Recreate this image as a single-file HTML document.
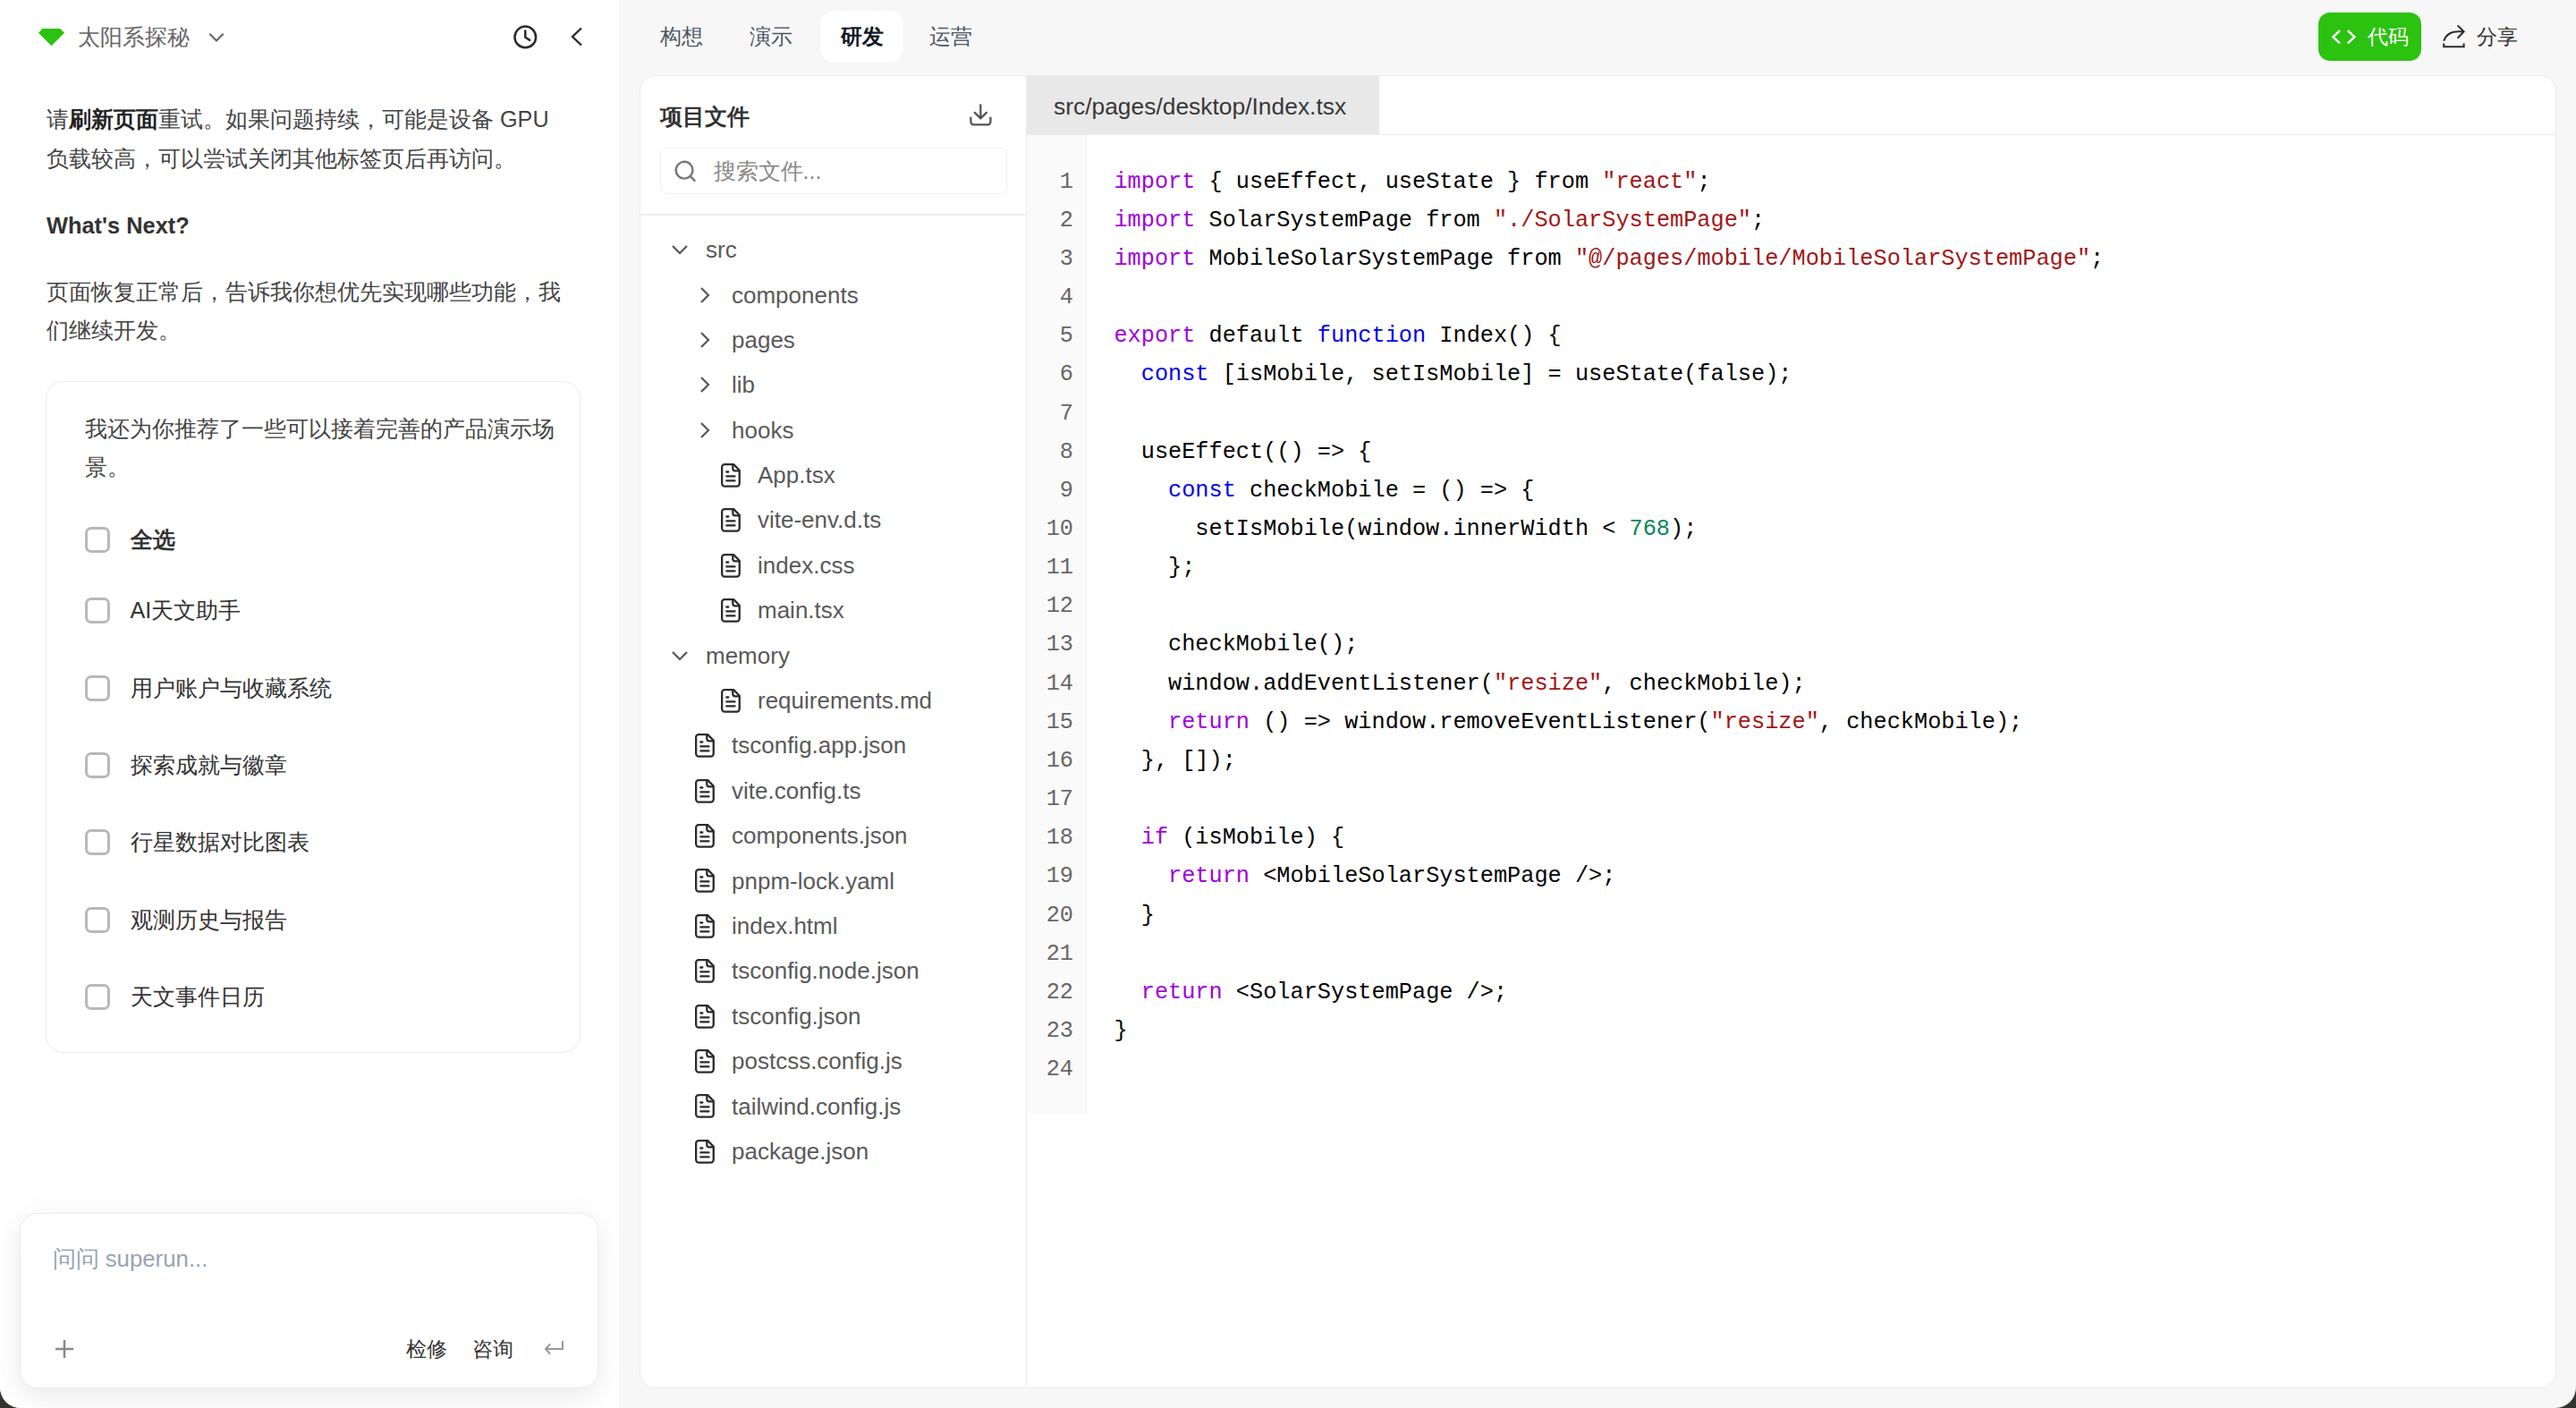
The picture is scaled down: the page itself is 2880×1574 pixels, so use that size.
<!DOCTYPE html>
<html><head><meta charset="utf-8">
<style>
*{box-sizing:border-box;margin:0;padding:0}
html,body{width:2880px;height:1574px;overflow:hidden;background:#34322c}
body{font-family:"Liberation Sans",sans-serif;position:relative}
#app{position:absolute;left:0;top:0;width:2880px;height:1574px;background:#f7f7f7;border-radius:0 0 23px 23px;overflow:hidden}
.abs{position:absolute}
.nw{white-space:nowrap}
#left{position:absolute;left:0;top:0;width:692px;height:1574px;background:#fff}
.ttl{left:87px;top:21.5px;font-size:25px;line-height:38px;color:#666}
.para{left:52px;font-size:25.2px;line-height:43.2px;color:#444}
.para b{color:#222;font-weight:bold}
.h3{left:52px;font-size:25.4px;font-weight:bold;color:#333;line-height:40px}
#card{left:50.5px;top:426px;width:598px;height:751px;border:1.5px solid #ececec;border-radius:20px;background:#fff}
.cb{position:absolute;left:43.5px;width:28px;height:28.5px;border:3px solid #b8b8b8;border-radius:7px}
.cbl{position:absolute;left:94px;font-size:25.2px;line-height:40px;color:#333}
#input{left:22px;top:1356px;width:647px;height:195.5px;border:1.5px solid #ececec;border-radius:20px;background:#fff;box-shadow:0 0 34px rgba(0,0,0,0.045),0 14px 28px rgba(0,0,0,0.05)}
.tab{position:absolute;top:12px;height:58px;font-size:23.6px;line-height:58px;color:#4b5563;padding:0 20px}
.tab.act{background:#fff;color:#111827;font-weight:bold;border-radius:16px;width:93px;padding:0;text-align:center}
#main{left:715px;top:84px;width:2143px;height:1468px;background:#fff;border:1.5px solid #ebebeb;border-radius:18px;overflow:hidden}
#files{position:absolute;left:0;top:0;width:432px;height:100%;border-right:1.5px solid #ebebeb}
.tr{position:absolute;font-size:26px;line-height:40px;color:#595959;white-space:nowrap}
#editor{position:absolute;left:432px;top:0;right:0;height:100%}
#etab{position:absolute;left:0;top:0;right:0;height:66px;border-bottom:1.5px solid #ebebeb}
#etab .t{position:absolute;left:0;top:0;width:394px;height:65px;overflow:hidden;background:#e8e8e8;font-size:26.4px;line-height:68px;color:#383838;padding-left:30px}
#gutter{position:absolute;left:0;top:66px;width:67px;height:1094px;background:#fafafa;border-right:1.5px solid #eeeeee}
#code{font-family:"Liberation Mono",monospace;font-size:25.28px;line-height:43.15px;white-space:pre;color:#000}
.ln{position:absolute;left:0;width:51px;text-align:right;color:#666}
.k{color:#a100d9}.f{color:#0000ee}.s{color:#a31515}.n{color:#098658}
</style></head><body>
<div id="app">
 <div id="left">
  <svg class="abs" style="left:42.9px;top:31.8px" width="30" height="21" viewBox="0 0 30 21"><path d="M4.5 0H24.2L29 4.8L14.5 19.2L0 4.8Z" fill="#2bc210"/></svg>
  <div class="abs nw ttl">太阳系探秘</div>
  <svg class="abs" style="left:230.5px;top:33.7px" width="22" height="14" viewBox="0 0 22 14"><path d="M3.3 3.8L11 11.5L18.7 3.8" fill="none" stroke="#666" stroke-width="2.2"/></svg>
  <svg class="abs" style="left:572px;top:27px" width="30" height="30" viewBox="0 0 30 30"><circle cx="15.3" cy="14.4" r="11.8" fill="none" stroke="#2b2b2b" stroke-width="2.5"/><path d="M15.3 7.4V14.8L20.3 17.9" fill="none" stroke="#2b2b2b" stroke-width="2.5" stroke-linecap="round" stroke-linejoin="round"/></svg>
  <svg class="abs" style="left:634px;top:28px" width="22" height="26" viewBox="0 0 22 26"><path d="M16 3.5L6 13L16 22.5" fill="none" stroke="#2b2b2b" stroke-width="2.4"/></svg>

  <div class="abs nw para" style="top:112.3px">请<b>刷新页面</b>重试。如果问题持续，可能是设备 GPU<br>负载较高，可以尝试关闭其他标签页后再访问。</div>
  <div class="abs nw h3" style="top:231.5px">What's Next?</div>
  <div class="abs nw para" style="top:305px">页面恢复正常后，告诉我你想优先实现哪些功能，我<br>们继续开发。</div>

  <div id="card" class="abs">
   <div class="abs nw para" style="left:43px;top:31px;color:#444">我还为你推荐了一些可以接着完善的产品演示场<br>景。</div>
   <div class="cb" style="top:162px"></div><div class="cbl nw" style="top:156px;font-weight:bold;color:#333">全选</div>
   <div class="cb" style="top:241px"></div><div class="cbl nw" style="top:235px">AI天文助手</div>
   <div class="cb" style="top:328px"></div><div class="cbl nw" style="top:322px">用户账户与收藏系统</div>
   <div class="cb" style="top:414px"></div><div class="cbl nw" style="top:408px">探索成就与徽章</div>
   <div class="cb" style="top:500px"></div><div class="cbl nw" style="top:494px">行星数据对比图表</div>
   <div class="cb" style="top:587px"></div><div class="cbl nw" style="top:581px">观测历史与报告</div>
   <div class="cb" style="top:673px"></div><div class="cbl nw" style="top:667px">天文事件日历</div>
  </div>

  <div id="input" class="abs">
   <div class="abs nw" style="left:35.5px;top:29.5px;font-size:25.8px;line-height:40px;color:#9aa3af">问问 superun...</div>
   <svg class="abs" style="left:37px;top:138.5px" width="24" height="24" viewBox="0 0 24 24"><path d="M12 2V22M2 12H22" stroke="#888" stroke-width="2.6"/></svg>
   <div class="abs nw" style="left:431px;top:131px;font-size:23.4px;line-height:40px;color:#333">检修</div>
   <div class="abs nw" style="left:504.5px;top:131px;font-size:23.4px;line-height:40px;color:#333">咨询</div>
   <svg class="abs" style="left:584px;top:140px" width="26" height="20" viewBox="0 0 26 20"><path d="M22 2V11H3M8 5.5L3 11L8 16.5" fill="none" stroke="#999" stroke-width="2"/></svg>
  </div>
 </div>

 <div class="tab" style="left:718px">构想</div>
 <div class="tab" style="left:818px">演示</div>
 <div class="tab act" style="left:917px">研发</div>
 <div class="tab" style="left:1019px">运营</div>

 <div class="abs" style="left:2592px;top:14px;width:115px;height:54px;background:#2bc210;border-radius:13px"></div>
 <svg class="abs" style="left:2604px;top:30px" width="32" height="22" viewBox="0 0 32 22"><path d="M12 4.2L4.4 11.3L12 18.4M20.8 4.2L28.4 11.3L20.8 18.4" fill="none" stroke="#fff" stroke-width="2.5"/></svg>
 <div class="abs nw" style="left:2647px;top:22px;font-size:23.4px;line-height:38px;color:#fff">代码</div>
 <svg class="abs" style="left:2725px;top:22px" width="36" height="36" viewBox="0 0 36 36"><path d="M22.6 6.4L29.6 13.3L22.6 20.8M7.2 23.8C9.6 16.8 15.5 13.3 23.5 13.3H29.4M7.2 26.6V30.2H29.6V26.6" fill="none" stroke="#2b2b2b" stroke-width="2"/></svg>
 <div class="abs nw" style="left:2769px;top:22px;font-size:23.4px;line-height:38px;color:#333">分享</div>

 <div id="main" class="abs">
  <div id="files">
   <div class="abs nw" style="left:22px;top:25.5px;font-size:24.6px;line-height:40px;font-weight:bold;color:#333">项目文件</div>
   <svg class="abs" style="left:365px;top:29px" width="30" height="30" viewBox="0 0 30 30"><path d="M15.3 3.4V18M8.7 11.9L15.3 18.3L21.9 11.9M4.4 17.6V22.3A3 3 0 0 0 7.4 25.3H23.4A3 3 0 0 0 26.4 22.3V17.6" fill="none" stroke="#555" stroke-width="2.3" stroke-linecap="round" stroke-linejoin="round"/></svg>
   <div class="abs" style="left:22px;top:80px;width:388px;height:52px;border:1.5px solid #f0f0f0;border-radius:8px"></div>
   <svg class="abs" style="left:36px;top:93px" width="30" height="30" viewBox="0 0 30 30"><circle cx="13.1" cy="12.2" r="9.4" fill="none" stroke="#777" stroke-width="2.4"/><path d="M19.9 19.1L24.6 23.8" stroke="#777" stroke-width="2.4" stroke-linecap="round"/></svg>
   <div class="abs nw" style="left:81.6px;top:86px;font-size:25.2px;line-height:40px;color:#888">搜索文件...</div>
   <div class="abs" style="left:0;top:154px;width:430px;height:1.5px;background:#eeeeee"></div>
  </div>
  <div id="editor">
   <div id="etab"><div class="t nw">src/pages/desktop/Index.tsx</div></div>
   <div id="gutter"></div>
  </div>
 </div>
<svg class="abs" style="left:749px;top:268.30px" width="22" height="22" viewBox="0 0 22 22"><path d="M3 7L11 15L19 7" fill="none" stroke="#555" stroke-width="2.2"/></svg>
<div class="tr" style="left:789px;top:254.10px;line-height:50.395px">src</div>
<svg class="abs" style="left:777px;top:318.69px" width="22" height="22" viewBox="0 0 22 22"><path d="M7 3L15 11L7 19" fill="none" stroke="#555" stroke-width="2.2"/></svg>
<div class="tr" style="left:818px;top:304.50px;line-height:50.395px">components</div>
<svg class="abs" style="left:777px;top:369.09px" width="22" height="22" viewBox="0 0 22 22"><path d="M7 3L15 11L7 19" fill="none" stroke="#555" stroke-width="2.2"/></svg>
<div class="tr" style="left:818px;top:354.89px;line-height:50.395px">pages</div>
<svg class="abs" style="left:777px;top:419.49px" width="22" height="22" viewBox="0 0 22 22"><path d="M7 3L15 11L7 19" fill="none" stroke="#555" stroke-width="2.2"/></svg>
<div class="tr" style="left:818px;top:405.29px;line-height:50.395px">lib</div>
<svg class="abs" style="left:777px;top:469.88px" width="22" height="22" viewBox="0 0 22 22"><path d="M7 3L15 11L7 19" fill="none" stroke="#555" stroke-width="2.2"/></svg>
<div class="tr" style="left:818px;top:455.68px;line-height:50.395px">hooks</div>
<svg class="abs" style="left:804.9px;top:516.78px" width="24" height="28" viewBox="0 0 24 28"><path d="M5.2 2.15H15.2L21.75 8.8V23.6A3 3 0 0 1 18.75 26.6H5.2A3 3 0 0 1 2.15 23.6V5.2A3 3 0 0 1 5.2 2.15Z" fill="none" stroke="#2b2b2b" stroke-width="2.3" stroke-linejoin="round"/><path d="M14.3 2.3V6.8A2.5 2.5 0 0 0 16.8 9.3H21.6" fill="none" stroke="#2b2b2b" stroke-width="2.3" stroke-linejoin="round"/><path d="M7.3 10.5H9.3M7.3 15.45H16.5M7.3 20.4H16.5" stroke="#2b2b2b" stroke-width="2.3" stroke-linecap="round"/></svg>
<div class="tr" style="left:847px;top:506.08px;line-height:50.395px">App.tsx</div>
<svg class="abs" style="left:804.9px;top:567.17px" width="24" height="28" viewBox="0 0 24 28"><path d="M5.2 2.15H15.2L21.75 8.8V23.6A3 3 0 0 1 18.75 26.6H5.2A3 3 0 0 1 2.15 23.6V5.2A3 3 0 0 1 5.2 2.15Z" fill="none" stroke="#2b2b2b" stroke-width="2.3" stroke-linejoin="round"/><path d="M14.3 2.3V6.8A2.5 2.5 0 0 0 16.8 9.3H21.6" fill="none" stroke="#2b2b2b" stroke-width="2.3" stroke-linejoin="round"/><path d="M7.3 10.5H9.3M7.3 15.45H16.5M7.3 20.4H16.5" stroke="#2b2b2b" stroke-width="2.3" stroke-linecap="round"/></svg>
<div class="tr" style="left:847px;top:556.47px;line-height:50.395px">vite-env.d.ts</div>
<svg class="abs" style="left:804.9px;top:617.57px" width="24" height="28" viewBox="0 0 24 28"><path d="M5.2 2.15H15.2L21.75 8.8V23.6A3 3 0 0 1 18.75 26.6H5.2A3 3 0 0 1 2.15 23.6V5.2A3 3 0 0 1 5.2 2.15Z" fill="none" stroke="#2b2b2b" stroke-width="2.3" stroke-linejoin="round"/><path d="M14.3 2.3V6.8A2.5 2.5 0 0 0 16.8 9.3H21.6" fill="none" stroke="#2b2b2b" stroke-width="2.3" stroke-linejoin="round"/><path d="M7.3 10.5H9.3M7.3 15.45H16.5M7.3 20.4H16.5" stroke="#2b2b2b" stroke-width="2.3" stroke-linecap="round"/></svg>
<div class="tr" style="left:847px;top:606.87px;line-height:50.395px">index.css</div>
<svg class="abs" style="left:804.9px;top:667.96px" width="24" height="28" viewBox="0 0 24 28"><path d="M5.2 2.15H15.2L21.75 8.8V23.6A3 3 0 0 1 18.75 26.6H5.2A3 3 0 0 1 2.15 23.6V5.2A3 3 0 0 1 5.2 2.15Z" fill="none" stroke="#2b2b2b" stroke-width="2.3" stroke-linejoin="round"/><path d="M14.3 2.3V6.8A2.5 2.5 0 0 0 16.8 9.3H21.6" fill="none" stroke="#2b2b2b" stroke-width="2.3" stroke-linejoin="round"/><path d="M7.3 10.5H9.3M7.3 15.45H16.5M7.3 20.4H16.5" stroke="#2b2b2b" stroke-width="2.3" stroke-linecap="round"/></svg>
<div class="tr" style="left:847px;top:657.26px;line-height:50.395px">main.tsx</div>
<svg class="abs" style="left:749px;top:721.86px" width="22" height="22" viewBox="0 0 22 22"><path d="M3 7L11 15L19 7" fill="none" stroke="#555" stroke-width="2.2"/></svg>
<div class="tr" style="left:789px;top:707.66px;line-height:50.395px">memory</div>
<svg class="abs" style="left:804.9px;top:768.75px" width="24" height="28" viewBox="0 0 24 28"><path d="M5.2 2.15H15.2L21.75 8.8V23.6A3 3 0 0 1 18.75 26.6H5.2A3 3 0 0 1 2.15 23.6V5.2A3 3 0 0 1 5.2 2.15Z" fill="none" stroke="#2b2b2b" stroke-width="2.3" stroke-linejoin="round"/><path d="M14.3 2.3V6.8A2.5 2.5 0 0 0 16.8 9.3H21.6" fill="none" stroke="#2b2b2b" stroke-width="2.3" stroke-linejoin="round"/><path d="M7.3 10.5H9.3M7.3 15.45H16.5M7.3 20.4H16.5" stroke="#2b2b2b" stroke-width="2.3" stroke-linecap="round"/></svg>
<div class="tr" style="left:847px;top:758.05px;line-height:50.395px">requirements.md</div>
<svg class="abs" style="left:775.8px;top:819.14px" width="24" height="28" viewBox="0 0 24 28"><path d="M5.2 2.15H15.2L21.75 8.8V23.6A3 3 0 0 1 18.75 26.6H5.2A3 3 0 0 1 2.15 23.6V5.2A3 3 0 0 1 5.2 2.15Z" fill="none" stroke="#2b2b2b" stroke-width="2.3" stroke-linejoin="round"/><path d="M14.3 2.3V6.8A2.5 2.5 0 0 0 16.8 9.3H21.6" fill="none" stroke="#2b2b2b" stroke-width="2.3" stroke-linejoin="round"/><path d="M7.3 10.5H9.3M7.3 15.45H16.5M7.3 20.4H16.5" stroke="#2b2b2b" stroke-width="2.3" stroke-linecap="round"/></svg>
<div class="tr" style="left:818px;top:808.45px;line-height:50.395px">tsconfig.app.json</div>
<svg class="abs" style="left:775.8px;top:869.54px" width="24" height="28" viewBox="0 0 24 28"><path d="M5.2 2.15H15.2L21.75 8.8V23.6A3 3 0 0 1 18.75 26.6H5.2A3 3 0 0 1 2.15 23.6V5.2A3 3 0 0 1 5.2 2.15Z" fill="none" stroke="#2b2b2b" stroke-width="2.3" stroke-linejoin="round"/><path d="M14.3 2.3V6.8A2.5 2.5 0 0 0 16.8 9.3H21.6" fill="none" stroke="#2b2b2b" stroke-width="2.3" stroke-linejoin="round"/><path d="M7.3 10.5H9.3M7.3 15.45H16.5M7.3 20.4H16.5" stroke="#2b2b2b" stroke-width="2.3" stroke-linecap="round"/></svg>
<div class="tr" style="left:818px;top:858.84px;line-height:50.395px">vite.config.ts</div>
<svg class="abs" style="left:775.8px;top:919.93px" width="24" height="28" viewBox="0 0 24 28"><path d="M5.2 2.15H15.2L21.75 8.8V23.6A3 3 0 0 1 18.75 26.6H5.2A3 3 0 0 1 2.15 23.6V5.2A3 3 0 0 1 5.2 2.15Z" fill="none" stroke="#2b2b2b" stroke-width="2.3" stroke-linejoin="round"/><path d="M14.3 2.3V6.8A2.5 2.5 0 0 0 16.8 9.3H21.6" fill="none" stroke="#2b2b2b" stroke-width="2.3" stroke-linejoin="round"/><path d="M7.3 10.5H9.3M7.3 15.45H16.5M7.3 20.4H16.5" stroke="#2b2b2b" stroke-width="2.3" stroke-linecap="round"/></svg>
<div class="tr" style="left:818px;top:909.24px;line-height:50.395px">components.json</div>
<svg class="abs" style="left:775.8px;top:970.33px" width="24" height="28" viewBox="0 0 24 28"><path d="M5.2 2.15H15.2L21.75 8.8V23.6A3 3 0 0 1 18.75 26.6H5.2A3 3 0 0 1 2.15 23.6V5.2A3 3 0 0 1 5.2 2.15Z" fill="none" stroke="#2b2b2b" stroke-width="2.3" stroke-linejoin="round"/><path d="M14.3 2.3V6.8A2.5 2.5 0 0 0 16.8 9.3H21.6" fill="none" stroke="#2b2b2b" stroke-width="2.3" stroke-linejoin="round"/><path d="M7.3 10.5H9.3M7.3 15.45H16.5M7.3 20.4H16.5" stroke="#2b2b2b" stroke-width="2.3" stroke-linecap="round"/></svg>
<div class="tr" style="left:818px;top:959.63px;line-height:50.395px">pnpm-lock.yaml</div>
<svg class="abs" style="left:775.8px;top:1020.73px" width="24" height="28" viewBox="0 0 24 28"><path d="M5.2 2.15H15.2L21.75 8.8V23.6A3 3 0 0 1 18.75 26.6H5.2A3 3 0 0 1 2.15 23.6V5.2A3 3 0 0 1 5.2 2.15Z" fill="none" stroke="#2b2b2b" stroke-width="2.3" stroke-linejoin="round"/><path d="M14.3 2.3V6.8A2.5 2.5 0 0 0 16.8 9.3H21.6" fill="none" stroke="#2b2b2b" stroke-width="2.3" stroke-linejoin="round"/><path d="M7.3 10.5H9.3M7.3 15.45H16.5M7.3 20.4H16.5" stroke="#2b2b2b" stroke-width="2.3" stroke-linecap="round"/></svg>
<div class="tr" style="left:818px;top:1010.03px;line-height:50.395px">index.html</div>
<svg class="abs" style="left:775.8px;top:1071.12px" width="24" height="28" viewBox="0 0 24 28"><path d="M5.2 2.15H15.2L21.75 8.8V23.6A3 3 0 0 1 18.75 26.6H5.2A3 3 0 0 1 2.15 23.6V5.2A3 3 0 0 1 5.2 2.15Z" fill="none" stroke="#2b2b2b" stroke-width="2.3" stroke-linejoin="round"/><path d="M14.3 2.3V6.8A2.5 2.5 0 0 0 16.8 9.3H21.6" fill="none" stroke="#2b2b2b" stroke-width="2.3" stroke-linejoin="round"/><path d="M7.3 10.5H9.3M7.3 15.45H16.5M7.3 20.4H16.5" stroke="#2b2b2b" stroke-width="2.3" stroke-linecap="round"/></svg>
<div class="tr" style="left:818px;top:1060.42px;line-height:50.395px">tsconfig.node.json</div>
<svg class="abs" style="left:775.8px;top:1121.52px" width="24" height="28" viewBox="0 0 24 28"><path d="M5.2 2.15H15.2L21.75 8.8V23.6A3 3 0 0 1 18.75 26.6H5.2A3 3 0 0 1 2.15 23.6V5.2A3 3 0 0 1 5.2 2.15Z" fill="none" stroke="#2b2b2b" stroke-width="2.3" stroke-linejoin="round"/><path d="M14.3 2.3V6.8A2.5 2.5 0 0 0 16.8 9.3H21.6" fill="none" stroke="#2b2b2b" stroke-width="2.3" stroke-linejoin="round"/><path d="M7.3 10.5H9.3M7.3 15.45H16.5M7.3 20.4H16.5" stroke="#2b2b2b" stroke-width="2.3" stroke-linecap="round"/></svg>
<div class="tr" style="left:818px;top:1110.82px;line-height:50.395px">tsconfig.json</div>
<svg class="abs" style="left:775.8px;top:1171.91px" width="24" height="28" viewBox="0 0 24 28"><path d="M5.2 2.15H15.2L21.75 8.8V23.6A3 3 0 0 1 18.75 26.6H5.2A3 3 0 0 1 2.15 23.6V5.2A3 3 0 0 1 5.2 2.15Z" fill="none" stroke="#2b2b2b" stroke-width="2.3" stroke-linejoin="round"/><path d="M14.3 2.3V6.8A2.5 2.5 0 0 0 16.8 9.3H21.6" fill="none" stroke="#2b2b2b" stroke-width="2.3" stroke-linejoin="round"/><path d="M7.3 10.5H9.3M7.3 15.45H16.5M7.3 20.4H16.5" stroke="#2b2b2b" stroke-width="2.3" stroke-linecap="round"/></svg>
<div class="tr" style="left:818px;top:1161.21px;line-height:50.395px">postcss.config.js</div>
<svg class="abs" style="left:775.8px;top:1222.31px" width="24" height="28" viewBox="0 0 24 28"><path d="M5.2 2.15H15.2L21.75 8.8V23.6A3 3 0 0 1 18.75 26.6H5.2A3 3 0 0 1 2.15 23.6V5.2A3 3 0 0 1 5.2 2.15Z" fill="none" stroke="#2b2b2b" stroke-width="2.3" stroke-linejoin="round"/><path d="M14.3 2.3V6.8A2.5 2.5 0 0 0 16.8 9.3H21.6" fill="none" stroke="#2b2b2b" stroke-width="2.3" stroke-linejoin="round"/><path d="M7.3 10.5H9.3M7.3 15.45H16.5M7.3 20.4H16.5" stroke="#2b2b2b" stroke-width="2.3" stroke-linecap="round"/></svg>
<div class="tr" style="left:818px;top:1211.61px;line-height:50.395px">tailwind.config.js</div>
<svg class="abs" style="left:775.8px;top:1272.70px" width="24" height="28" viewBox="0 0 24 28"><path d="M5.2 2.15H15.2L21.75 8.8V23.6A3 3 0 0 1 18.75 26.6H5.2A3 3 0 0 1 2.15 23.6V5.2A3 3 0 0 1 5.2 2.15Z" fill="none" stroke="#2b2b2b" stroke-width="2.3" stroke-linejoin="round"/><path d="M14.3 2.3V6.8A2.5 2.5 0 0 0 16.8 9.3H21.6" fill="none" stroke="#2b2b2b" stroke-width="2.3" stroke-linejoin="round"/><path d="M7.3 10.5H9.3M7.3 15.45H16.5M7.3 20.4H16.5" stroke="#2b2b2b" stroke-width="2.3" stroke-linecap="round"/></svg>
<div class="tr" style="left:818px;top:1262.00px;line-height:50.395px">package.json</div>
<div id="lnums" class="abs" style="left:1150px;top:181.6px;width:50px;text-align:right;font-family:'Liberation Mono',monospace;font-size:25.28px;line-height:43.15px;white-space:pre;color:#666">1
2
3
4
5
6
7
8
9
10
11
12
13
14
15
16
17
18
19
20
21
22
23
24</div>
<div id="code" class="abs" style="left:1245.4px;top:181.6px"><span class="k">import</span> { useEffect, useState } from <span class="s">"react"</span>;
<span class="k">import</span> SolarSystemPage from <span class="s">"./SolarSystemPage"</span>;
<span class="k">import</span> MobileSolarSystemPage from <span class="s">"@/pages/mobile/MobileSolarSystemPage"</span>;

<span class="k">export</span> default <span class="f">function</span> Index() {
  <span class="f">const</span> [isMobile, setIsMobile] = useState(false);

  useEffect(() =&gt; {
    <span class="f">const</span> checkMobile = () =&gt; {
      setIsMobile(window.innerWidth &lt; <span class="n">768</span>);
    };

    checkMobile();
    window.addEventListener(<span class="s">"resize"</span>, checkMobile);
    <span class="k">return</span> () =&gt; window.removeEventListener(<span class="s">"resize"</span>, checkMobile);
  }, []);

  <span class="k">if</span> (isMobile) {
    <span class="k">return</span> &lt;MobileSolarSystemPage /&gt;;
  }

  <span class="k">return</span> &lt;SolarSystemPage /&gt;;
}
</div>
</div>
<script>(function(){var w=window.innerWidth;if(w&&Math.abs(w-2880)>2){document.documentElement.style.zoom=(w/2880);}})();</script>
</body></html>
